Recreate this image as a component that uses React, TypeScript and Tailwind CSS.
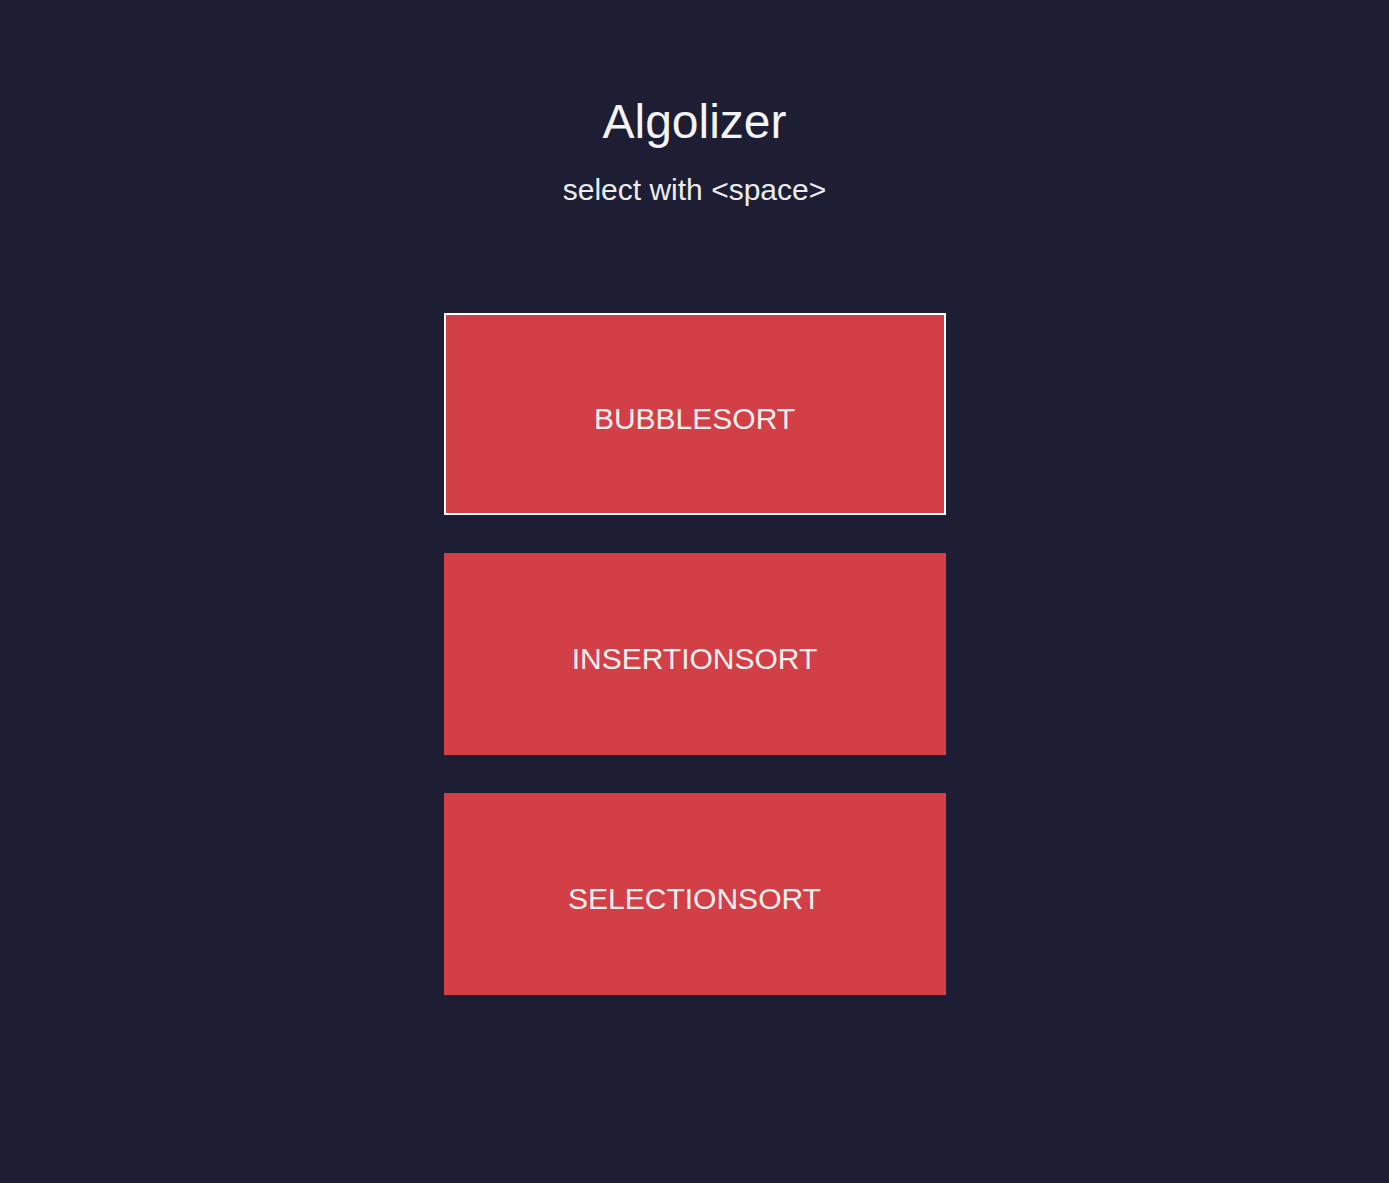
const algorithms = ["BUBBLESORT", "INSERTIONSORT", "SELECTIONSORT"];

export default function App() {
  const selected = 0;
  return (
    <main
      className="min-h-screen bg-[#1d1e33] text-white flex flex-col items-center pt-[94px]"
      style={{ fontFamily: '"Liberation Sans", Arial, sans-serif' }}
    >
      <h1 className="text-[48px] leading-[56px] text-[#f4f4f6]">Algolizer</h1>
      <p className="mt-[22px] text-[30px] leading-[35px] text-[#ececf0]">select with &lt;space&gt;</p>

      <div className="mt-[106px] flex flex-col gap-[38px]">
        {algorithms.map((name, i) => (
          <button
            key={name}
            className={
              "w-[502px] h-[202px] bg-[#d33f46] flex items-center justify-center pt-[8px] text-[30px] text-[#f7f0f0] " +
              (i === selected ? "border-2 border-white" : "border-2 border-transparent")
            }
          >
            {name}
          </button>
        ))}
      </div>
    </main>
  );
}
